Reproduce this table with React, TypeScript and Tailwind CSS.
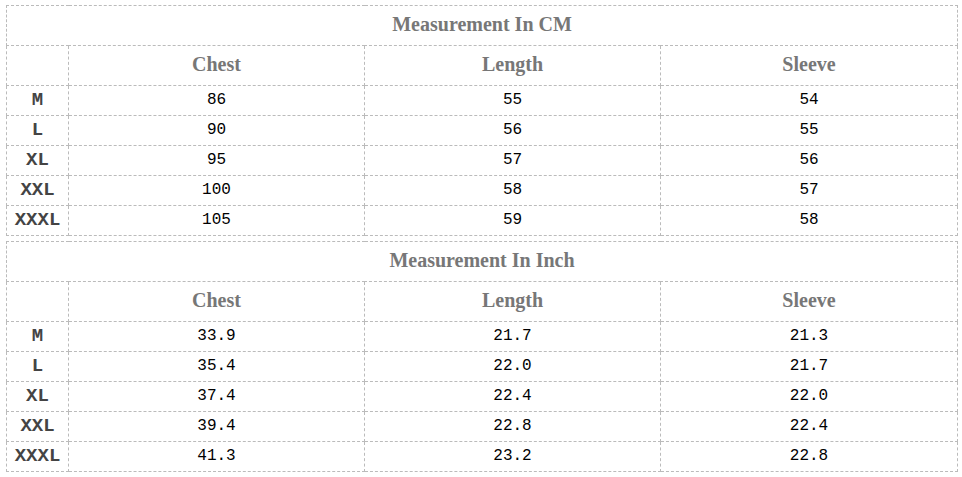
import React from "react";

const cm = [
  ["M", "86", "55", "54"],
  ["L", "90", "56", "55"],
  ["XL", "95", "57", "56"],
  ["XXL", "100", "58", "57"],
  ["XXXL", "105", "59", "58"],
];
const inch = [
  ["M", "33.9", "21.7", "21.3"],
  ["L", "35.4", "22.0", "21.7"],
  ["XL", "37.4", "22.4", "22.0"],
  ["XXL", "39.4", "22.8", "22.4"],
  ["XXXL", "41.3", "23.2", "22.8"],
];

const serif = { fontFamily: '"Liberation Serif", "Times New Roman", serif' };
const mono = { fontFamily: '"Liberation Mono", "Courier New", monospace' };

function SizeTable({ title, rows }: { title: string; rows: string[][] }) {
  const cell = "border border-dashed border-[#bbb] text-center p-0";
  return (
    <table className="border-collapse table-fixed w-[951px]">
      <colgroup>
        <col className="w-[62px]" />
        <col className="w-[296px]" />
        <col className="w-[296px]" />
        <col className="w-[297px]" />
      </colgroup>
      <tbody>
        <tr className="h-[40px]">
          <td colSpan={4} className={`${cell} pb-[4px] text-[20px] leading-[24px] font-bold text-[#777]`} style={serif}>
            {title}
          </td>
        </tr>
        <tr className="h-[40px]">
          <td className={cell}></td>
          {["Chest", "Length", "Sleeve"].map((h) => (
            <td key={h} className={`${cell} pb-[4px] text-[20px] leading-[24px] font-bold text-[#777]`} style={serif}>
              {h}
            </td>
          ))}
        </tr>
        {rows.map((r) => (
          <tr key={r[0]} className="h-[30px]">
            <td className={`${cell} pb-[1px] text-[19px] leading-[20px] font-bold text-[#444]`} style={mono}>
              {r[0]}
            </td>
            {r.slice(1).map((v, i) => (
              <td key={i} className={`${cell} pb-[2px] text-[16px] leading-[20px] text-black`} style={mono}>
                {v}
              </td>
            ))}
          </tr>
        ))}
      </tbody>
    </table>
  );
}

export default function App() {
  return (
    <div className="w-[962px] h-[477px] bg-white pt-[5px] pl-[6px] flex flex-col gap-[5px]">
      <SizeTable title="Measurement In CM" rows={cm} />
      <SizeTable title="Measurement In Inch" rows={inch} />
    </div>
  );
}
